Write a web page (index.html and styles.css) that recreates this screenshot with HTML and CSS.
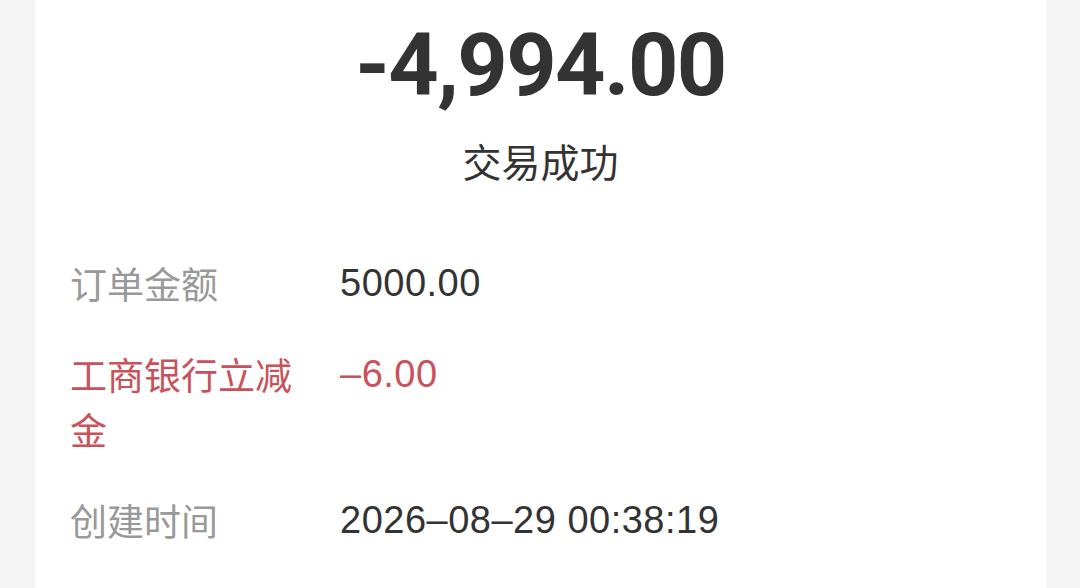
FILE: index.html
```html
<!DOCTYPE html>
<html lang="zh-CN">
<head>
<meta charset="utf-8">
<title>交易详情</title>
<link rel="stylesheet" href="styles.css">
</head>
<body>
<main class="card">
  <section class="hero">
    <div class="amount">-4,994.00</div>
    <div class="status">交易成功</div>
  </section>
  <section class="details">
    <div class="row">
      <div class="label">订单金额</div>
      <div class="value">5000.00</div>
    </div>
    <div class="row discount">
      <div class="label">工商银行立减金</div>
      <div class="value">–6.00</div>
    </div>
    <div class="row">
      <div class="label">创建时间</div>
      <div class="value">2026–08–29 00:38:19</div>
    </div>
  </section>
</main>
</body>
</html>
```

FILE: styles.css
```css
html, body {
  margin: 0;
  padding: 0;
  height: 100%;
}
body {
  background: #f5f5f5;
  font-family: Roboto, "Noto Sans CJK SC", sans-serif;
  overflow: hidden;
}
.card {
  background: #ffffff;
  margin: 0 34px 0 35px;
  min-height: 100%;
  box-sizing: border-box;
  padding: 0 35px;
}
.hero {
  display: flex;
  flex-direction: column;
  align-items: center;
  padding-top: 15px;
}
.amount {
  font-family: Roboto, sans-serif;
  font-weight: 700;
  font-size: 88px;
  line-height: 100px;
  color: #333333;
  letter-spacing: -1.6px;
}
.status {
  font-family: "Noto Sans CJK SC", sans-serif;
  font-size: 39px;
  line-height: 56px;
  color: #333333;
  margin-top: 17px;
}
.details {
  display: flex;
  flex-direction: column;
  gap: 36px;
  margin-top: 68px;
}
.row {
  display: flex;
  align-items: flex-start;
  font-size: 37px;
  line-height: 55px;
}
.label {
  width: 240px;
  flex: 0 0 240px;
  margin-right: 30px;
  color: #999999;
  font-family: "Noto Sans CJK SC", sans-serif;
}
.value {
  color: #333333;
  font-family: "Liberation Sans", Arial, sans-serif;
  font-size: 38px;
  letter-spacing: 0.5px;
}
.discount .label,
.discount .value {
  color: #c9525a;
}
```
